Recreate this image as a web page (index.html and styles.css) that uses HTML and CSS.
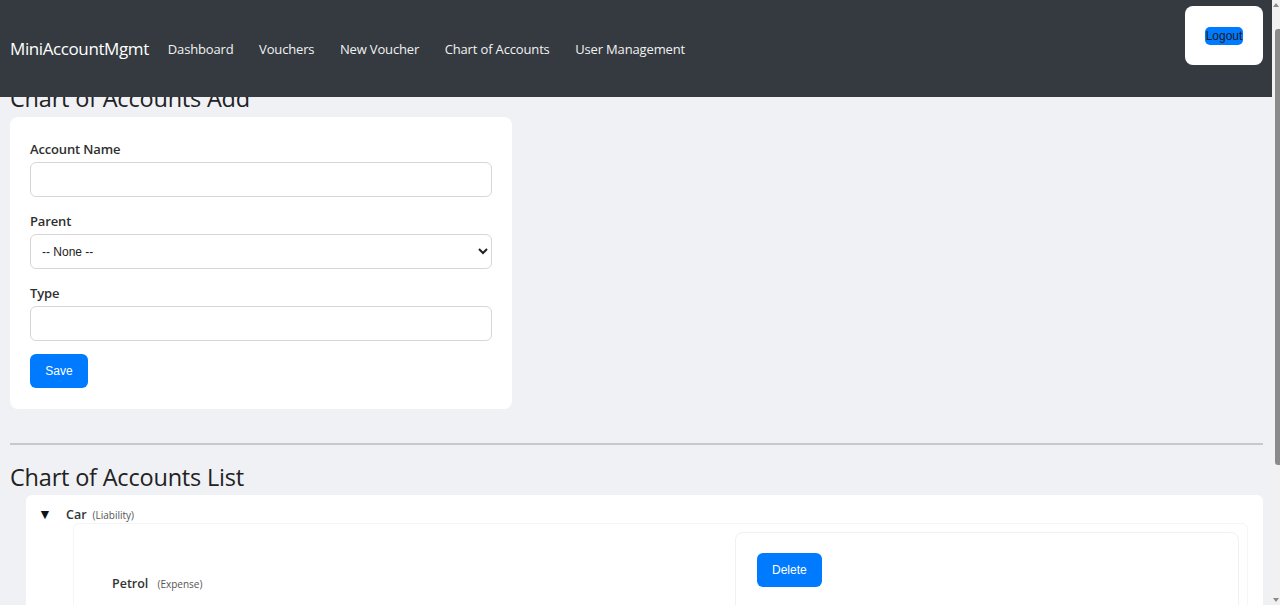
FILE: index.html
```html
<!DOCTYPE html>
<html lang="en">
<head>
<meta charset="utf-8">
<title>MiniAccountMgmt</title>
<link rel="stylesheet" href="styles.css">
</head>
<body>
<header class="navbar">
  <div class="nav-left">
    <a class="brand" href="#">MiniAccountMgmt</a>
    <nav class="nav-links">
      <a href="#">Dashboard</a>
      <a href="#">Vouchers</a>
      <a href="#">New Voucher</a>
      <a href="#">Chart of Accounts</a>
      <a href="#">User Management</a>
    </nav>
  </div>
  <form class="logout-form">
    <button type="button" class="logout-btn">Logout</button>
  </form>
</header>

<main class="page">
  <h2 class="page-title">Chart of Accounts Add</h2>
  <form class="card form-card">
    <div class="form-group">
      <label class="form-label">Account Name</label>
      <input class="form-control" type="text">
    </div>
    <div class="form-group">
      <label class="form-label">Parent</label>
      <select class="form-control form-select">
        <option>-- None --</option>
      </select>
    </div>
    <div class="form-group last">
      <label class="form-label">Type</label>
      <input class="form-control" type="text">
    </div>
    <button type="button" class="btn save-btn">Save</button>
  </form>

  <hr class="divider">

  <h2 class="page-title list-title">Chart of Accounts List</h2>
  <div class="card tree-card">
    <div class="tree-row">
      <span class="caret">&#9660;</span>
      <span class="acc-name">Car</span>
      <span class="acc-type">(Liability)</span>
    </div>
    <div class="child-box">
      <div class="child-row">
        <div class="child-info">
          <span class="acc-name">Petrol</span>
          <span class="acc-type">(Expense)</span>
        </div>
        <div class="action-box">
          <button type="button" class="btn">Delete</button>
        </div>
      </div>
    </div>
  </div>
</main>

<div class="scrollbar" aria-hidden="true">
  <span class="sb-arrow sb-up"></span>
  <span class="sb-thumb"></span>
  <span class="sb-space"></span>
  <span class="sb-arrow sb-down"></span>
</div>
</body>
</html>
```

FILE: styles.css
```css
html, body {
  margin: 0;
  padding: 0;
}

body {
  background: #f0f1f5;
  font-family: "Open Sans", "Noto Sans", sans-serif;
  color: #333;
}

.navbar {
  position: fixed;
  top: 0;
  left: 0;
  right: 8px;
  height: 97px;
  background: #343a40;
  display: flex;
  justify-content: space-between;
  align-items: flex-start;
  padding: 0 9px 0 10px;
  box-sizing: border-box;
  z-index: 10;
}

.nav-left {
  display: flex;
  align-items: center;
  height: 97px;
  gap: 19px;
}

.brand {
  color: #fff;
  text-decoration: none;
  font-size: 17px;
  letter-spacing: -0.4px;
}

.nav-links {
  display: flex;
  gap: 25.5px;
}

.nav-links a {
  color: #f2f2f2;
  text-decoration: none;
  font-size: 13px;
  letter-spacing: -0.15px;
}

.logout-form {
  margin: 6px 0 0;
  background: #fff;
  border-radius: 8px;
  width: 78px;
  height: 59px;
  display: flex;
  align-items: center;
  justify-content: center;
}

.logout-btn {
  background: #007bff;
  border: none;
  border-radius: 5px;
  color: #1a1a1a;
  font-family: "Liberation Sans", Arial, sans-serif;
  font-size: 12px;
  width: 38px;
  height: 18px;
  padding: 0;
  white-space: nowrap;
  display: flex;
  align-items: center;
  justify-content: center;
}

.page {
  padding: 84px 17px 200px 10px;
}

.page-title {
  font-size: 23.5px;
  font-weight: 400;
  color: #222;
  margin: 0 0 4px;
  line-height: 29px;
  letter-spacing: -0.2px;
}

.card {
  background: #fff;
  border-radius: 8px;
}

.form-card {
  width: 502px;
  box-sizing: border-box;
  padding: 23px 20px 21px;
}

.form-group {
  margin-bottom: 15px;
}

.form-group.last {
  margin-bottom: 13px;
}

.form-label {
  display: block;
  font-size: 13px;
  font-weight: 600;
  color: #2f2f2f;
  margin: 0 0 4px;
  line-height: 18px;
  letter-spacing: -0.15px;
}

.form-control {
  display: block;
  width: 100%;
  height: 35px;
  box-sizing: border-box;
  border: 1px solid #d6d6d6;
  border-radius: 6px;
  background: #fff;
  font-family: "Liberation Sans", Arial, sans-serif;
  font-size: 12px;
  color: #222;
  padding: 0 12px;
}

.form-select {
  padding: 0 8px 0 7px;
}

.btn {
  display: block;
  background: #007bff;
  color: #fff;
  border: none;
  border-radius: 6px;
  font-family: "Liberation Sans", Arial, sans-serif;
  font-size: 12px;
  height: 34px;
  padding: 0 15px;
}

.save-btn {
  width: 58px;
  padding: 0;
}

.divider {
  margin: 34px 0 18px;
  border: none;
  border-top: 2px solid #c8c8c8;
}

.list-title {
  margin-bottom: 3px;
}

.tree-card {
  margin-left: 16px;
  border-radius: 6px;
  padding: 9px 15px 0 12px;
}

.tree-row {
  display: flex;
  align-items: baseline;
  height: 19px;
  line-height: 19px;
}

.caret {
  font-size: 14px;
  color: #111;
  width: 28px;
}

.acc-name {
  font-size: 12.5px;
  font-weight: 600;
  color: #333;
  margin-right: 6px;
}

.child-info .acc-name {
  margin-right: 5px;
}

.acc-type {
  font-size: 10px;
  color: #555;
}

.child-box {
  margin-left: 35px;
  border: 1px solid #f5f5f7;
  border-radius: 6px;
  padding: 8px 8px 0 38px;
  height: 120px;
}

.child-row {
  display: flex;
  justify-content: space-between;
}

.child-info {
  padding-top: 39px;
}

.action-box {
  width: 504px;
  box-sizing: border-box;
  border: 1px solid #f1f1f3;
  border-radius: 8px;
  padding: 20px 21px;
  height: 110px;
}

.scrollbar {
  position: fixed;
  top: 0;
  right: 0;
  bottom: 0;
  width: 8px;
  background: #f1f1f1;
  display: flex;
  flex-direction: column;
  align-items: flex-end;
  z-index: 20;
}

.sb-arrow {
  width: 0;
  height: 0;
  border-left: 3px solid transparent;
  border-right: 3px solid transparent;
  margin: 0 1px 0 0;
}

.sb-up {
  border-bottom: 4px solid #8a8a8a;
  margin-top: 3px;
}

.sb-down {
  border-top: 4px solid #8a8a8a;
  margin-bottom: 3px;
}

.sb-thumb {
  width: 5px;
  height: 436px;
  margin-top: 22px;
  background: #8a8a8a;
  border-radius: 3px 0 0 3px;
}

.sb-space {
  flex: 1;
}
```
